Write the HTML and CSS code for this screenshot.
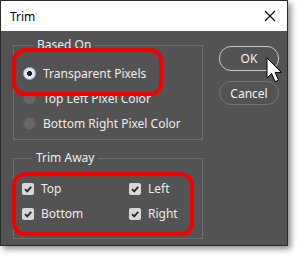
FILE: index.html
```html
<!DOCTYPE html>
<html>
<head>
<meta charset="utf-8">
<link rel="stylesheet" href="styles.css">
</head>
<body>
<div class="dialog">
  <div class="titlebar">
    <span class="title">Trim</span>
    <svg class="close" width="12" height="12" viewBox="0 0 12 12"><path d="M1 1 L11 11 M11 1 L1 11" stroke="#111" stroke-width="1.2" fill="none"/></svg>
  </div>
  <div class="body">
    <div class="groups">
      <fieldset class="group based">
        <legend>Based On</legend>
        <div class="row"><span class="radio on"></span><span>Transparent Pixels</span></div>
        <div class="row"><span class="radio"></span><span>Top Left Pixel Color</span></div>
        <div class="row"><span class="radio"></span><span>Bottom Right Pixel Color</span></div>
      </fieldset>
      <fieldset class="group away">
        <legend>Trim Away</legend>
        <div class="checks">
          <div class="row"><span class="check"><svg width="12" height="12" viewBox="0 0 12 12"><path d="M3 6.2 L5.2 8.4 L9.2 3.8" stroke="#2a2a2a" stroke-width="1.8" fill="none"/></svg></span><span>Top</span></div>
          <div class="row"><span class="check"><svg width="12" height="12" viewBox="0 0 12 12"><path d="M3 6.2 L5.2 8.4 L9.2 3.8" stroke="#2a2a2a" stroke-width="1.8" fill="none"/></svg></span><span>Left</span></div>
          <div class="row"><span class="check"><svg width="12" height="12" viewBox="0 0 12 12"><path d="M3 6.2 L5.2 8.4 L9.2 3.8" stroke="#2a2a2a" stroke-width="1.8" fill="none"/></svg></span><span>Bottom</span></div>
          <div class="row"><span class="check"><svg width="12" height="12" viewBox="0 0 12 12"><path d="M3 6.2 L5.2 8.4 L9.2 3.8" stroke="#2a2a2a" stroke-width="1.8" fill="none"/></svg></span><span>Right</span></div>
        </div>
      </fieldset>
    </div>
    <div class="buttons">
      <button class="btn ok">OK</button>
      <button class="btn cancel">Cancel</button>
    </div>
    <div class="mark mark1"></div>
    <div class="mark mark2"></div>
    <svg class="cursor" width="19" height="28" viewBox="0 0 19 28"><path d="M1 1 L1 21 L5.6 16.6 L9.2 24.6 L12.6 23.2 L9.1 15.4 L15.4 15.4 Z" fill="#fff" stroke="#000" stroke-width="1" stroke-linejoin="round"/></svg>
  </div>
</div>
</body>
</html>
```
FILE: styles.css
```css
* { box-sizing: border-box; }
html, body { margin: 0; padding: 0; background: #fff; }
body {
  width: 298px;
  height: 255px;
  font-family: "Noto Sans", "DejaVu Sans", sans-serif;
  font-size: 12px;
}
.dialog {
  width: 288px;
  height: 246px;
  border: 1px solid #2c2c2c;
  background: #535353;
  box-shadow: 3px 3px 6px rgba(0,0,0,0.45);
  display: flex;
  flex-direction: column;
}
.titlebar {
  height: 30px;
  background: #fff;
  display: flex;
  align-items: center;
  justify-content: space-between;
  padding: 0 11px 0 9px;
}
.title { color: #000; font-size: 12px; }
.close { display: block; }
.body {
  position: relative;
  flex: 1;
  display: flex;
  padding: 7px 0 0 12px;
  color: #ededed;
}
.groups { width: 190px; display: flex; flex-direction: column; gap: 11px; }
.group {
  margin: 0;
  border: 1px solid #6c6c6c;
  padding: 0 0 0 9px;
}
.group legend {
  margin-left: 10px;
  padding: 0 4px;
  line-height: 14px;
}
.based { padding-top: 9px; padding-bottom: 3px; }
.based .row { height: 25px; display: flex; align-items: center; gap: 7px; }
.radio {
  width: 13px; height: 13px; border-radius: 50%;
  background: #676767;
  border: 1px solid #5c5c5c;
  flex: none;
}
.radio.on {
  background: radial-gradient(circle, #1e1e1e 0 2.2px, #e6e6e6 2.8px);
  border: 1.5px solid #8fb8ec;
}
.away { padding-top: 11px; padding-bottom: 12px; padding-left: 8px; }
.checks { display: grid; grid-template-columns: 107px 1fr; }
.checks .row { height: 25px; display: flex; align-items: center; gap: 7px; }
.check {
  width: 12px; height: 12px; border-radius: 2px;
  background: #d8d8d8;
  flex: none;
  display: block;
}
.check svg { display: block; }
.buttons {
  margin-left: 16px;
  padding-top: 8px;
  display: flex;
  flex-direction: column;
  gap: 10px;
}
.btn {
  width: 60px;
  height: 24px;
  border-radius: 12px;
  background: transparent;
  font-family: "Noto Sans", "DejaVu Sans", sans-serif;
  font-size: 12px;
  color: #f2f2f2;
  padding: 0;
}
.ok { border: 1.5px solid #c9c9c9; height: 25px; }
.cancel { border: 1px solid #727272; }
.mark {
  position: absolute;
  border: 4px solid #f40000;
  border-radius: 13px;
}
.mark1 { left: 11px; top: 17px; width: 151px; height: 48px; }
.mark2 { left: 11px; top: 141px; width: 182px; height: 64px; }
.cursor { position: absolute; left: 265px; top: 26px; }
```
